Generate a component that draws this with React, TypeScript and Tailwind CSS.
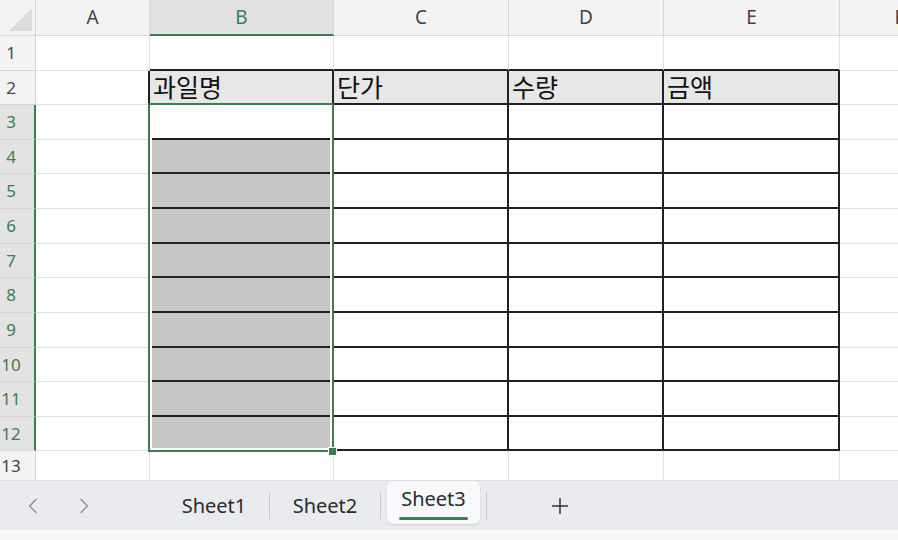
import React from 'react'

const cols = [
  { name: 'A', w: 'w-[114px]' },
  { name: 'B', w: 'w-[184px]' },
  { name: 'C', w: 'w-[175px]' },
  { name: 'D', w: 'w-[155px]' },
  { name: 'E', w: 'w-[176px]' },
  { name: 'F', w: 'w-[120px]' },
]

// row heights, rows 1..13
const rows = [
  'h-[35px]', 'h-[34px]',
  'h-[35px]', 'h-[34px]', 'h-[35px]', 'h-[35px]', 'h-[34px]',
  'h-[35px]', 'h-[35px]', 'h-[34px]', 'h-[35px]', 'h-[34px]',
  'h-[30px]',
]

const headings: Record<number, string> = { 2: '과일명', 3: '단가', 4: '수량', 5: '금액' }

function cellClass(r: number, c: number) {
  let bg = 'bg-white'
  if (r === 2 && c >= 2 && c <= 5) bg = 'bg-[#e7e7e7]'
  else if (c === 2 && r >= 4 && r <= 12) bg = 'bg-[#c6c6c6]'

  const rightBlack = r >= 2 && r <= 12 && c >= 1 && c <= 5
  const bottomBlack = r >= 1 && r <= 12 && c >= 2 && c <= 5
  const br = rightBlack ? 'border-r-2 border-r-[#202020]' : 'border-r border-r-[#e1e1e1]'
  const bb = bottomBlack ? 'border-b-2 border-b-[#202020]' : 'border-b border-b-[#e1e1e1]'
  return `${bg} ${br} ${bb}`
}

function Chevron({ dir }: { dir: 'left' | 'right' }) {
  return (
    <svg width="11" height="16" viewBox="0 0 11 16" fill="none">
      <path
        d={dir === 'left' ? 'M9 1.5L2.5 8L9 14.5' : 'M2 1.5L8.5 8L2 14.5'}
        stroke="#8c8c8c"
        strokeWidth="1.3"
        strokeLinecap="round"
        strokeLinejoin="round"
      />
    </svg>
  )
}

export default function App() {
  return (
    <div className="relative w-[898px] h-[540px] overflow-hidden bg-white font-['Noto_Sans','Noto_Sans_CJK_KR',sans-serif]">
      {/* sheet grid */}
      <div className="h-[480px] overflow-hidden">
        {/* column headers */}
        <div className="flex h-[36px] whitespace-nowrap">
          <div className="w-[36px] shrink-0 flex items-end justify-end pr-[3px] pb-[4px] bg-[#f3f3f3] border-r border-b border-[#d6d6d6]">
            <svg width="23" height="23" viewBox="0 0 23 23">
              <path d="M23 0V23H0Z" fill="#dcdcdc" />
            </svg>
          </div>
          {cols.map((col) =>
            col.name === 'B' ? (
              <div
                key={col.name}
                className={`${col.w} shrink-0 flex items-center justify-center bg-[#e1e1e1] border-r border-r-[#d6d6d6] border-b-2 border-b-[#3d7c52] text-[19px] text-[#3d7c52]`}
              >
                {col.name}
              </div>
            ) : (
              <div
                key={col.name}
                className={`${col.w} shrink-0 flex items-center justify-center bg-[#f3f3f3] border-r border-b border-[#d6d6d6] text-[19px] text-[#444]`}
              >
                {col.name}
              </div>
            )
          )}
        </div>

        {rows.map((h, i) => {
          const r = i + 1
          const sel = r >= 3 && r <= 12
          return (
            <div key={r} className={`flex ${h} whitespace-nowrap`}>
              {sel ? (
                <div className="w-[36px] shrink-0 flex items-center bg-[#e3e3e3] border-r-2 border-r-[#3d7c52] border-b border-b-[#d6d6d6] text-[17px] text-[#3d7c52]">
                  <span className="w-[22px] text-center">{r}</span>
                </div>
              ) : (
                <div className="w-[36px] shrink-0 flex items-center bg-[#f3f3f3] border-r border-b border-[#d6d6d6] text-[17px] text-[#444]">
                  <span className="w-[22px] text-center">{r}</span>
                </div>
              )}
              {cols.map((col, ci) => {
                const c = ci + 1
                return (
                  <div key={col.name} className={`${col.w} shrink-0 flex items-end ${cellClass(r, c)}`}>
                    {r === 2 && headings[c] && (
                      <span className="pl-[3px] pb-[1px] text-[25px] leading-[32px] text-[#111] font-['Noto_Sans_CJK_KR',sans-serif]">
                        {headings[c]}
                      </span>
                    )}
                  </div>
                )
              })}
            </div>
          )
        })}
      </div>

      {/* selection B3:B12 */}
      <div className="absolute left-[148px] top-[103px] w-[186px] h-[349px] border-2 border-[#3d7c52] shadow-[inset_0_0_0_2px_white] pointer-events-none" />
      <div className="absolute left-[328px] top-[447px] w-[9px] h-[9px] bg-[#3d7c52] border border-white" />

      {/* sheet tabs */}
      <div className="flex items-center h-[50px] bg-[#e9ebef] border-t border-[#dedede] font-['Noto_Sans',sans-serif]">
        <div className="ml-[27px]">
          <Chevron dir="left" />
        </div>
        <div className="ml-[41px]">
          <Chevron dir="right" />
        </div>
        <div className="ml-[69px] w-[110px] text-center text-[20px] text-[#2b2b2b]">Sheet1</div>
        <div className="w-px h-[27px] bg-[#c8c8c8]" />
        <div className="w-[110px] text-center text-[20px] text-[#2b2b2b]">Sheet2</div>
        <div className="w-px h-[27px] bg-[#c8c8c8]" />
        <div className="ml-[6px] self-start w-[93px] h-[43px] rounded-md bg-[#f8f9fa] shadow-[0_1px_2px_rgba(0,0,0,0.12)] flex flex-col items-center justify-end pb-[4px]">
          <span className="text-[20px] leading-[26px] text-[#2b2b2b]">Sheet3</span>
          <span className="mt-[5px] w-[69px] h-[3px] rounded-full bg-[#3d7c52]" />
        </div>
        <div className="ml-[6px] w-px h-[27px] bg-[#c8c8c8]" />
        <div className="ml-[64px]">
          <svg width="18" height="18" viewBox="0 0 18 18">
            <path d="M9 1V17M1 9H17" stroke="#333" strokeWidth="1.5" />
          </svg>
        </div>
      </div>
      <div className="h-[10px] bg-[#f7f7f7]" />
    </div>
  )
}
